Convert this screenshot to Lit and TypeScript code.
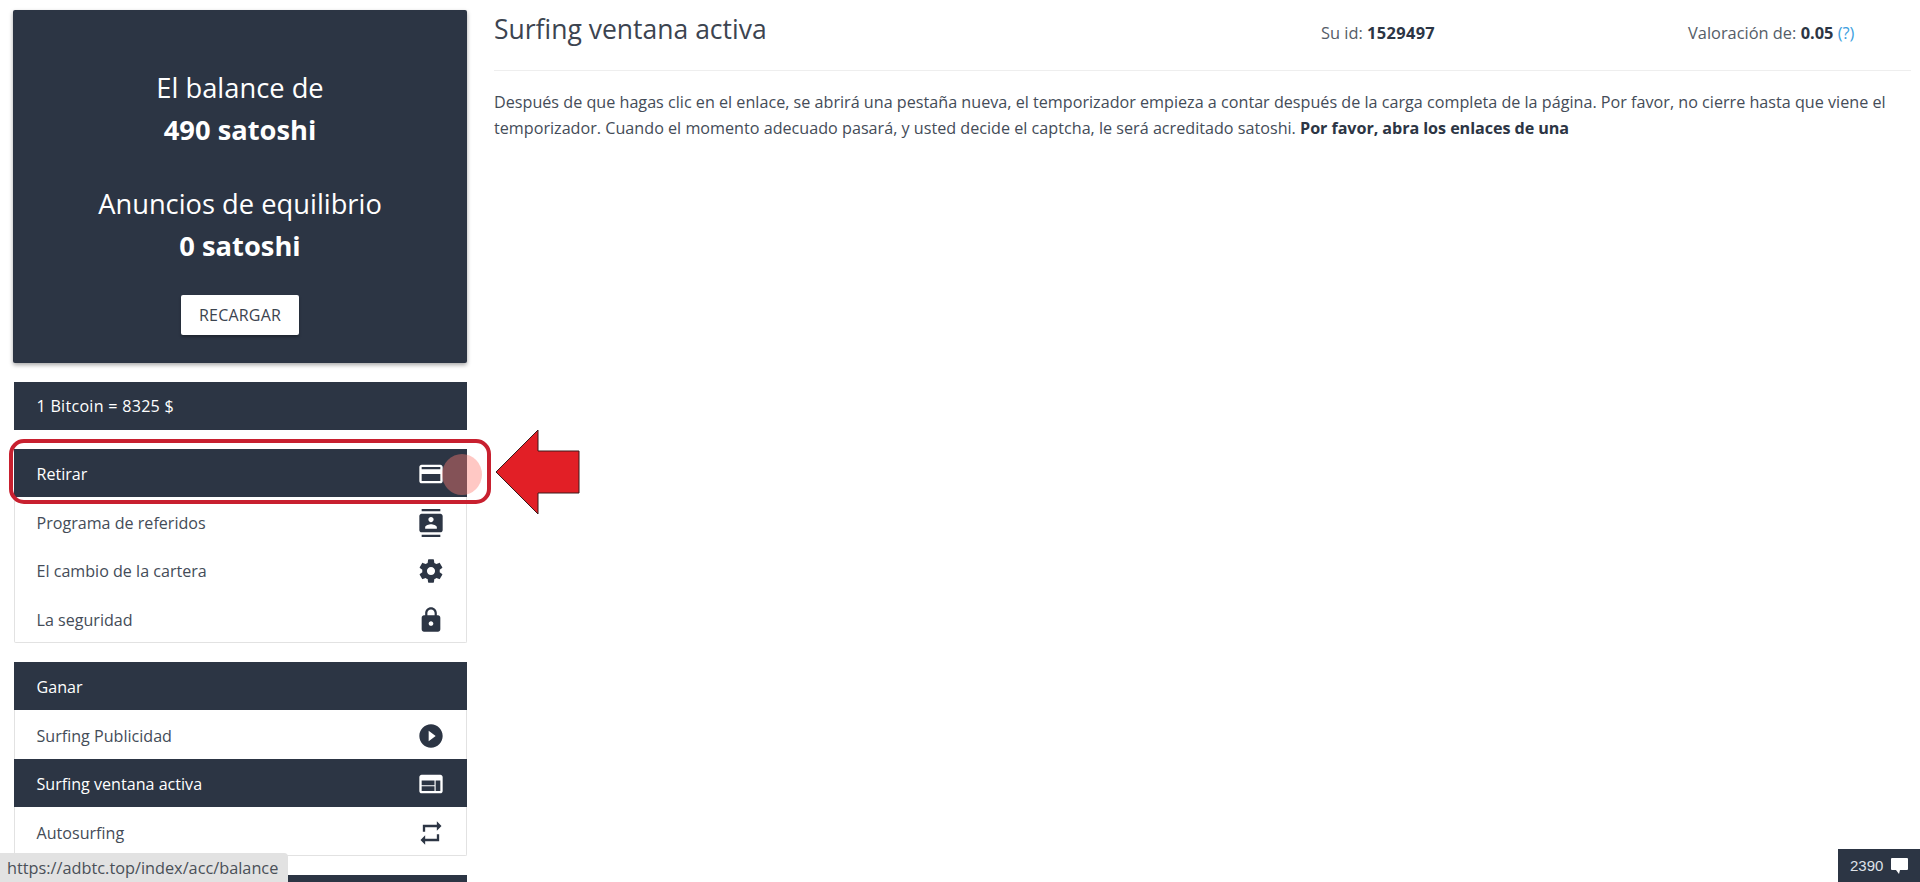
import { LitElement, html, css, svg } from "lit";
import { customElement } from "lit/decorators.js";

const ICONS: Record<string, string> = {
  card: "M20 4H4c-1.11 0-1.99.89-1.99 2L2 18c0 1.11.89 2 2 2h16c1.11 0 2-.89 2-2V6c0-1.11-.89-2-2-2zm0 14H4v-6h16v6zm0-10H4V6h16v2z",
  contacts: "M20 0H4v2h16V0zM4 24h16v-2H4v2zM20 4H4c-1.1 0-2 .9-2 2v12c0 1.1.9 2 2 2h16c1.1 0 2-.9 2-2V6c0-1.1-.9-2-2-2zm-8 2.75c1.24 0 2.25 1.01 2.25 2.25s-1.01 2.25-2.25 2.25S9.75 10.24 9.75 9 10.76 6.75 12 6.75zM17 17H7v-1.5c0-1.67 3.33-2.5 5-2.5s5 .83 5 2.5V17z",
  settings: "M19.43 12.98c.04-.32.07-.64.07-.98s-.03-.66-.07-.98l2.11-1.65c.19-.15.24-.42.12-.64l-2-3.46c-.12-.22-.39-.3-.61-.22l-2.49 1c-.52-.4-1.08-.73-1.69-.98l-.38-2.65C14.46 2.18 14.25 2 14 2h-4c-.25 0-.46.18-.49.42l-.38 2.65c-.61.25-1.17.59-1.69.98l-2.49-1c-.23-.09-.49 0-.61.22l-2 3.46c-.13.22-.07.49.12.64l2.11 1.65c-.04.32-.07.65-.07.98s.03.66.07.98l-2.11 1.65c-.19.15-.24.42-.12.64l2 3.46c.12.22.39.3.61.22l2.49-1c.52.4 1.08.73 1.69.98l.38 2.65c.03.24.24.42.49.42h4c.25 0 .46-.18.49-.42l.38-2.65c.61-.25 1.17-.59 1.69-.98l2.49 1c.23.09.49 0 .61-.22l2-3.46c.12-.22.07-.49-.12-.64l-2.11-1.65zM12 15.5c-1.93 0-3.5-1.57-3.5-3.5s1.57-3.5 3.5-3.5 3.5 1.57 3.5 3.5-1.57 3.5-3.5 3.5z",
  lock: "M18 8h-1V6c0-2.76-2.24-5-5-5S7 3.24 7 6v2H6c-1.1 0-2 .9-2 2v10c0 1.1.9 2 2 2h12c1.1 0 2-.9 2-2V10c0-1.1-.9-2-2-2zm-6 9c-1.1 0-2-.9-2-2s.9-2 2-2 2 .9 2 2-.9 2-2 2zm3.1-9H8.9V6c0-1.71 1.39-3.1 3.1-3.1 1.71 0 3.1 1.39 3.1 3.1v2z",
  play: "M12 2C6.48 2 2 6.48 2 12s4.48 10 10 10 10-4.48 10-10S17.52 2 12 2zm-2 14.5v-9l6 4.5-6 4.5z",
  web: "M20 4H4c-1.1 0-1.99.9-1.99 2L2 18c0 1.1.9 2 2 2h16c1.1 0 2-.9 2-2V6c0-1.1-.9-2-2-2zm-5 14H4v-4h11v4zm0-5H4V9h11v4zm5 5h-4V9h4v9z",
  repeat: "M7 7h10v3l4-4-4-4v3H5v6h2V7zm10 10H7v-3l-4 4 4 4v-3h12v-6h-2v4z",
};

interface Row { label: string; icon?: string; active?: boolean }

const ACCOUNT: Row[] = [
  { label: "Retirar", icon: "card", active: true },
  { label: "Programa de referidos", icon: "contacts" },
  { label: "El cambio de la cartera", icon: "settings" },
  { label: "La seguridad", icon: "lock" },
];
const EARN: Row[] = [
  { label: "Ganar", active: true },
  { label: "Surfing Publicidad", icon: "play" },
  { label: "Surfing ventana activa", icon: "web", active: true },
  { label: "Autosurfing", icon: "repeat" },
];

@customElement("app-root")
export class AppRoot extends LitElement {
  static styles = css`
    :host {
      display: block;
      position: relative;
      width: 1920px;
      height: 882px;
      overflow: hidden;
      background: #fff;
      font-family: "Open Sans", "Noto Sans", sans-serif;
      color: #3c4450;
    }
    .page { display: flex; align-items: flex-start; height: 882px; }
    .side {
      flex: none;
      width: 454px;
      margin: 10px 0 0 13px;
      display: flex;
      flex-direction: column;
      gap: 19px;
    }
    .balance {
      height: 353px;
      box-sizing: border-box;
      padding-top: 57px;
      background: #2c3544;
      color: #fff;
      border-radius: 2px;
      box-shadow: 0 2px 4px rgba(0,0,0,.35);
      text-align: center;
      font-size: 27.3px;
      line-height: 42px;
      display: flex;
      flex-direction: column;
      align-items: center;
    }
    .balance b { font-weight: 700; }
    .balance .second { margin-top: 32px; }
    .reload {
      margin-top: 28px;
      width: 118px;
      height: 40px;
      display: flex;
      align-items: center;
      justify-content: center;
      background: #fff;
      color: #3c4450;
      border-radius: 2px;
      box-shadow: 0 2px 3px rgba(0,0,0,.3);
      font-size: 16px;
      line-height: 1;
      letter-spacing: .2px;
    }
    .rate {
      margin: 0 .5px;
      height: 48px;
      box-sizing: border-box;
      padding-left: 23px;
      display: flex;
      align-items: center;
      background: #2c3544;
      color: #fff;
      font-size: 16.1px;
      letter-spacing: .27px;
    }
    .list {
      border: 1px solid #e2e2e2;
      border-top: 0;
      border-radius: 0 0 2px 2px;
      box-sizing: border-box;
      background: #fff;
      margin-left: 0.5px;
    }
    .row {
      height: 48.3px;
      box-sizing: border-box;
      padding: 3px 22px 0 22px;
      display: flex;
      align-items: center;
      justify-content: space-between;
      font-size: 16.1px;
      color: #444c58;
    }
    .row.active { background: #2c3544; color: #fff; margin: 0 -1px; padding: 2px 23px 0 23px; }
    .row svg { width: 28px; height: 28px; fill: #2c3544; display: block; margin-right: -1px; }
    .row.active svg { fill: #fff; }
    .stub { height: 40px; background: #2c3544; margin: 0 .5px; }
    .main { flex: 1; padding: 0 9px 0 27px; min-width: 0; }
    .head {
      display: grid;
      grid-template-columns: 827px 367px 1fr;
      align-items: center;
      height: 71px;
      box-sizing: border-box;
      border-bottom: 1px solid #eeeeee;
    }
    .head h1 {
      margin: 0 0 12px;
      font-size: 26.5px;
      font-weight: 400;
      line-height: 1;
      color: #3c4450;
    }
    .stat { font-size: 16.4px; margin-bottom: 6px; color: #555d68; }
    .stat b { color: #2c3544; }
    .stat.id b { letter-spacing: .35px; }
    .stat a { color: #3d9fe0; text-decoration: none; }
    .intro {
      margin: 18px 0 0;
      font-size: 16.17px;
      line-height: 26px;
      color: #444c58;
      white-space: nowrap;
    }
    .intro b { color: #2c3544; letter-spacing: -.07px; }
    .ring {
      position: absolute;
      left: 9px;
      top: 439px;
      width: 482px;
      height: 65px;
      box-sizing: border-box;
      border: 4px solid #c8202f;
      border-radius: 15px;
      pointer-events: none;
    }
    .ripple {
      position: absolute;
      left: 442px;
      top: 454px;
      width: 40px;
      height: 41px;
      border-radius: 50%;
      background: rgba(255,124,115,.42);
    }
    .arrow {
      position: absolute;
      left: 494px;
      top: 428px;
      width: 88px;
      height: 88px;
    }
    .url {
      position: absolute;
      left: 0;
      bottom: 0;
      height: 29px;
      width: 288px;
      box-sizing: border-box;
      padding-left: 7px;
      display: flex;
      align-items: center;
      background: #e2e2e2;
      border-radius: 0 4px 0 0;
      color: #4a5058;
      font-size: 16.3px;
      white-space: nowrap;
    }
    .chat {
      position: absolute;
      right: 0;
      bottom: 0;
      width: 82px;
      height: 33px;
      box-sizing: border-box;
      padding: 0 12px;
      display: flex;
      align-items: center;
      justify-content: space-between;
      background: #2c3544;
      color: #dfe2e8;
      font-family: "Liberation Sans", Arial, sans-serif;
      font-size: 15px;
      font-weight: 400;
    }
    .chat svg { width: 17px; height: 16px; fill: #fff; display: block; }
  `;

  private row(r: Row) {
    return html`<div class="row ${r.active ? "active" : ""}">
      <span>${r.label}</span>
      ${r.icon ? svg`<svg viewBox="0 0 24 24"><path d=${ICONS[r.icon]}></path></svg>` : ""}
    </div>`;
  }

  render() {
    return html`
      <div class="page">
        <aside class="side">
          <section class="balance">
            <div>El balance de</div>
            <b>490 satoshi</b>
            <div class="second">Anuncios de equilibrio</div>
            <b>0 satoshi</b>
            <div class="reload">RECARGAR</div>
          </section>
          <div class="rate">1 Bitcoin = 8325 $</div>
          <nav class="list">${ACCOUNT.map((r) => this.row(r))}</nav>
          <nav class="list">${EARN.map((r) => this.row(r))}</nav>
          <div class="stub"></div>
        </aside>
        <main class="main">
          <header class="head">
            <h1>Surfing ventana activa</h1>
            <div class="stat id">Su id: <b>1529497</b></div>
            <div class="stat">Valoración de: <b>0.05</b> <a>(?)</a></div>
          </header>
          <p class="intro">
            Después de que hagas clic en el enlace, se abrirá una pestaña nueva, el temporizador empieza a contar después de la carga completa de la página. Por favor, no cierre hasta que viene el<br />temporizador. Cuando el momento adecuado pasará, y usted decide el captcha, le será acreditado satoshi. <b>Por favor, abra los enlaces de una</b>
          </p>
        </main>
      </div>
      <div class="ring"></div>
      <div class="ripple"></div>
      <svg class="arrow" viewBox="0 0 88 88">
        <path d="M2 44 L44 2 V23 H85 V65 H44 V86 Z" fill="#e21f26" stroke="#3a1a1a" stroke-width="1"></path>
      </svg>
      <div class="url">https://adbtc.top/index/acc/balance</div>
      <div class="chat">
        <span>2390</span>
        <svg viewBox="0 0 17 16"><path d="M1 0h15a1 1 0 0 1 1 1v10a1 1 0 0 1-1 1H9l-1 4-3-4H1a1 1 0 0 1-1-1V1a1 1 0 0 1 1-1z"></path></svg>
      </div>
    `;
  }
}
